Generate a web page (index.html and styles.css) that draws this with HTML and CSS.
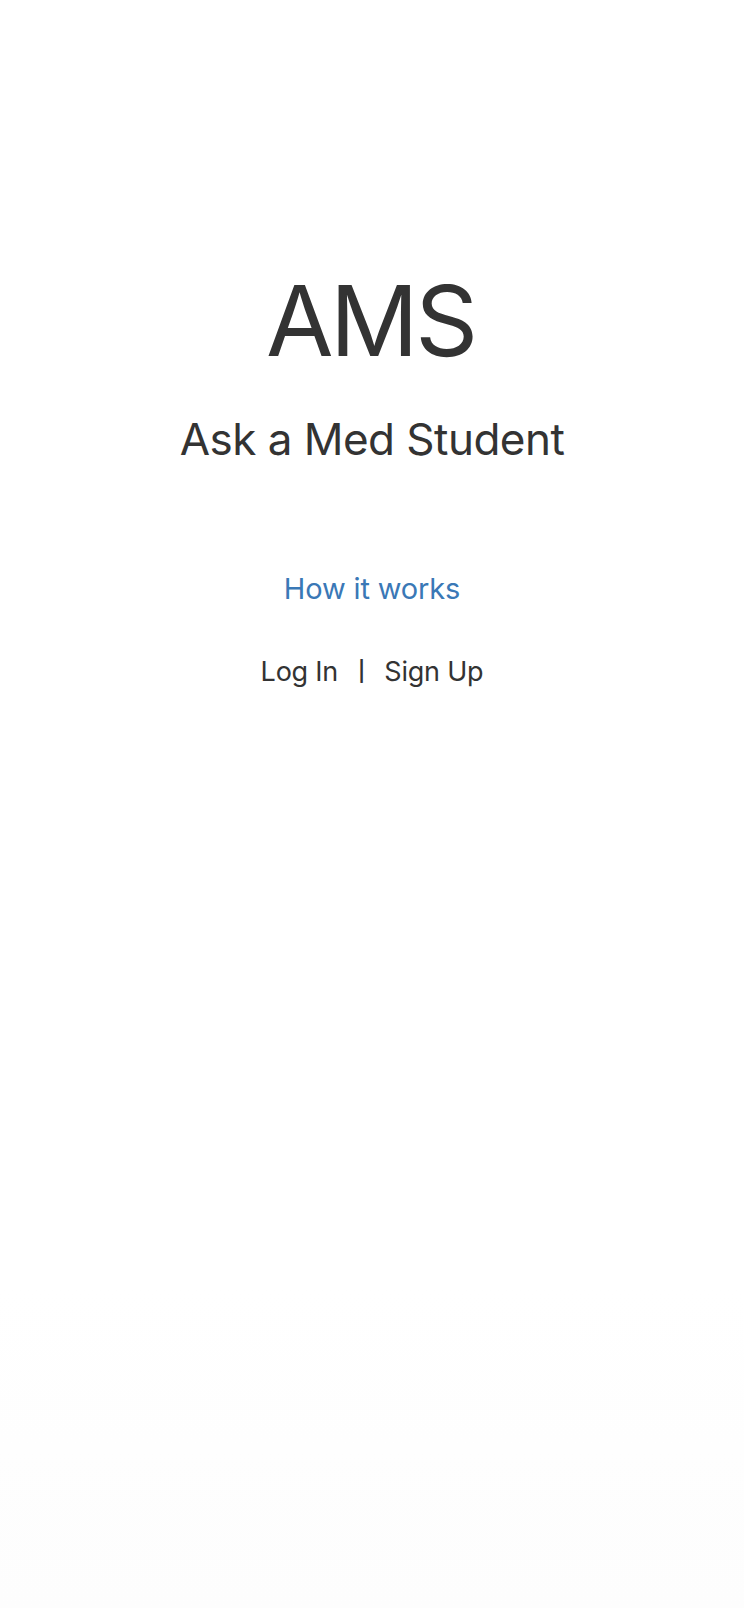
FILE: index.html
```html
<!DOCTYPE html>
<html lang="en">
<head>
<meta charset="utf-8">
<title>AMS - Ask a Med Student</title>
<link rel="stylesheet" href="styles.css">
</head>
<body>
<main class="landing">
  <h1 class="logo">AMS</h1>
  <h2 class="tagline">Ask a Med Student</h2>
  <a class="how" href="#">How it works</a>
  <div class="auth"><a href="#">Log In</a><span class="sep">|</span><a href="#">Sign Up</a></div>
</main>
</body>
</html>
```

FILE: styles.css
```css
html, body {
  margin: 0;
  padding: 0;
  background: #ffffff;
}
body {
  font-family: Inter, "Liberation Sans", sans-serif;
  color: #333333;
  min-height: 1608px;
  background: linear-gradient(to bottom, #ffffff 0%, #ffffff 80%, #fdfdfd 100%);
}
.landing {
  display: flex;
  flex-direction: column;
  align-items: center;
  padding-top: 261px;
}
.logo {
  margin: 0;
  font-size: 98px;
  font-weight: 400;
  line-height: 120px;
  letter-spacing: -0.035em;
  text-indent: -0.035em;
}
.tagline {
  margin: 31px 0 0;
  font-size: 44px;
  font-weight: 400;
  line-height: 54px;
  letter-spacing: -0.012em;
}
.how {
  margin-top: 105px;
  font-size: 29px;
  line-height: 36px;
  color: #3a78b6;
  text-decoration: none;
  letter-spacing: -0.005em;
}
.auth {
  margin-top: 46px;
  font-size: 27px;
  line-height: 36px;
  letter-spacing: -0.008em;
  white-space: nowrap;
}
.auth a {
  color: #333333;
  text-decoration: none;
}
.sep {
  display: inline-block;
  margin: 0 19px 0 20px;
  font-size: 20px;
  font-weight: 600;
  vertical-align: 3px;
  letter-spacing: 0;
}
```
